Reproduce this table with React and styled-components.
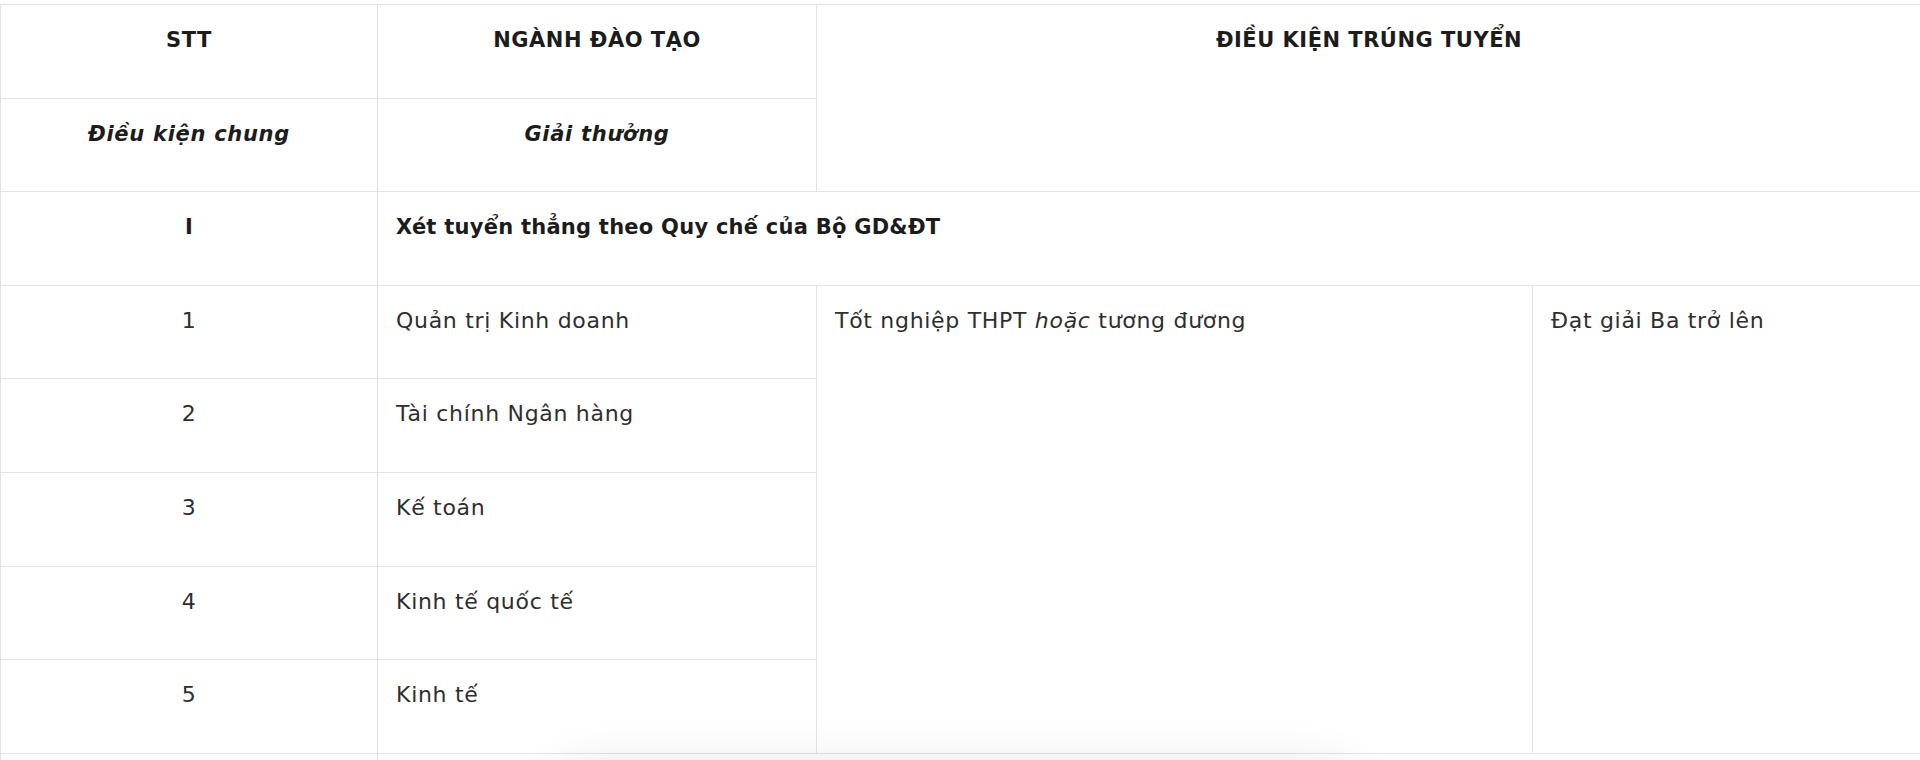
import React from 'react'
import styled, {createGlobalStyle} from "styled-components"

const Global=createGlobalStyle `
html, body {
  margin: 0;
  padding: 0;
  background: #fff;
  overflow: hidden;
}
body {
  font-family: "DejaVu Sans", "Liberation Sans", sans-serif;
  color: #2b2b2b;
}
`

const Page=styled.div `
padding-top: 4px;
width: 1920px;
height: 756px;
overflow: hidden;
`

const Table=styled.table `
width: 1921px;
border-collapse: collapse;
table-layout: fixed;
`

const Row=styled.tr `
height: 93.6px;
`

const Cell=styled.td `
border: 1px solid #e3e3e3;
vertical-align: top;
padding: 21px 18px 0;
font-size: 22px;
line-height: 28px;
letter-spacing: 0.7px;
text-align: ${({center})=>center ? "center" : "left"};
font-weight: ${({bold})=>bold ? 700 : 400};
color: ${({bold})=>bold ? "#1c1c1c" : "#2e2e2e"};
`

const Head=styled.th `
border: 1px solid #e3e3e3;
vertical-align: top;
padding: 21px 18px 0;
font-size: 21px;
line-height: 28px;
letter-spacing: ${({italic})=>italic ? "0.7px" : "0.5px"};
text-align: center;
font-weight: 700;
font-style: ${({italic})=>italic ? "italic" : "normal"};
color: #1c1c1c;
`

const Bold=styled.span `
font-size: 21px;
letter-spacing: 0.25px;
`

const Shade=styled.div `
position: fixed;
left: 570px;
top: 782px;
width: 770px;
height: 40px;
border-radius: 20px;
background: #fff;
box-shadow: 0 0 50px 14px rgba(0,0,0,0.12);
`

const majors=["Quản trị Kinh doanh","Tài chính Ngân hàng","Kế toán","Kinh tế quốc tế","Kinh tế"]

const App =() => {
  return (
    <Page>
      <Global/>
      <Table>
        <colgroup>
          <col style={{width:"377px"}}/>
          <col style={{width:"439px"}}/>
          <col style={{width:"716px"}}/>
          <col style={{width:"389px"}}/>
        </colgroup>
        <tbody>
          <Row>
            <Head>STT</Head>
            <Head>NGÀNH ĐÀO TẠO</Head>
            <Head colSpan={2} rowSpan={2}>ĐIỀU KIỆN TRÚNG TUYỂN</Head>
          </Row>
          <Row>
            <Head italic>Điều kiện chung</Head>
            <Head italic>Giải thưởng</Head>
          </Row>
          <Row>
            <Cell center bold><Bold>I</Bold></Cell>
            <Cell bold colSpan={3}><Bold>Xét tuyển thẳng theo Quy chế của Bộ GD&amp;ĐT</Bold></Cell>
          </Row>
          {majors.map((m,i)=>(
            <Row key={m}>
              <Cell center>{i+1}</Cell>
              <Cell>{m}</Cell>
              {i===0 && <Cell rowSpan={5}>Tốt nghiệp THPT <i>hoặc</i> tương đương</Cell>}
              {i===0 && <Cell rowSpan={5}>Đạt giải Ba trở lên</Cell>}
            </Row>
          ))}
          <Row>
            <Cell center bold/>
            <Cell bold colSpan={3}/>
          </Row>
        </tbody>
      </Table>
      <Shade/>
    </Page>
  )
}

export default App
